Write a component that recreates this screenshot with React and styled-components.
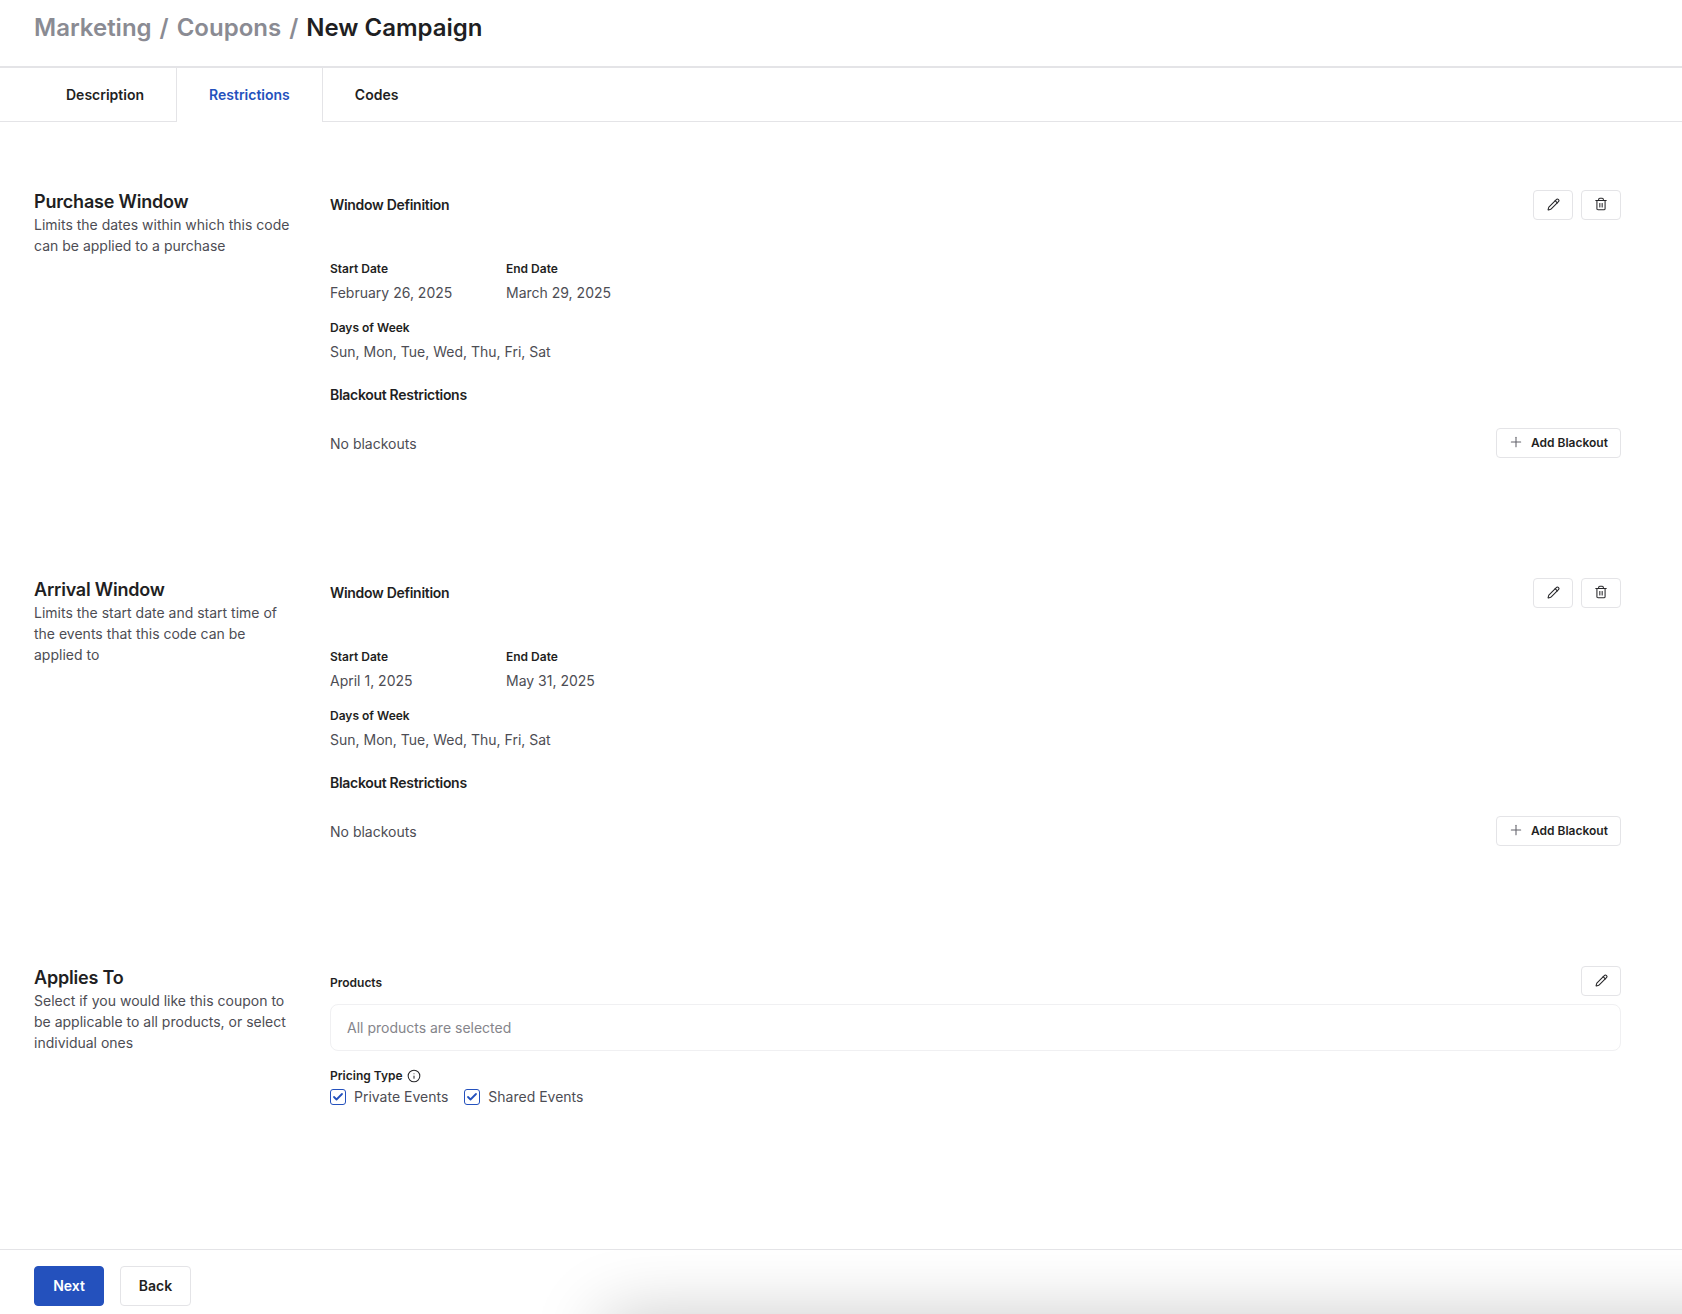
import React from "react";
import styled, { createGlobalStyle } from "styled-components";
import { Pencil, Trash2, Plus, Info, Check } from "lucide-react";

const Global = createGlobalStyle`
  html, body { margin: 0; padding: 0; background: #fff; }
  body { font-family: Inter, "Liberation Sans", sans-serif; color: #1f1f23; }
  * { box-sizing: border-box; }
`;

const Page = styled.div`
  width: 1682px;
  height: 1314px;
  display: flex;
  flex-direction: column;
  background: #fff;
  overflow: hidden;
`;

const Header = styled.header`
  flex: none;
  height: 68px;
  padding: 12px 34px 0;
  border-bottom: 2px solid #e4e4e7;
  display: flex;
  align-items: flex-start;
  font-size: 24px;
  font-weight: 600;
  line-height: 32px;
  color: #8a8b93;
`;

const Crumb = styled.span`
  color: ${(p) => (p.$current ? "#1f1f23" : "#8a8b93")};
`;

const Sep = styled.span`
  margin: 0 8px;
`;

const TabBar = styled.nav`
  flex: none;
  height: 54px;
  padding-left: 34px;
  border-bottom: 1px solid #e4e4e7;
  display: flex;
`;

const Tab = styled.div`
  height: ${(p) => (p.$active ? "54px" : "53px")};
  padding: 0 32px ${(p) => (p.$active ? "1px" : "0")};
  display: flex;
  align-items: center;
  font-size: 14px;
  font-weight: 600;
  color: ${(p) => (p.$active ? "#2451bd" : "#1f1f23")};
  background: #fff;
  border-right: ${(p) => (p.$last ? "none" : "1px solid #e4e4e7")};
  position: relative;
`;

const Main = styled.main`
  flex: 1;
  min-height: 0;
  padding: 68px 61px 0 34px;
`;

const Section = styled.section`
  display: grid;
  grid-template-columns: 296px 1fr;
  height: ${(p) => (p.$last ? "auto" : "388px")};
`;

const SectionIntro = styled.div`
  width: 258px;
`;

const SectionTitle = styled.h2`
  margin: 0;
  font-size: 18px;
  font-weight: 600;
  line-height: 24px;
  letter-spacing: -0.2px;
  color: #1f1f23;
`;

const SectionDesc = styled.p`
  margin: 0;
  font-size: 14px;
  line-height: 21px;
  color: #4d4d54;
`;

const Content = styled.div`
  display: flex;
  flex-direction: column;
`;

const HeadRow = styled.div`
  height: 30px;
  display: flex;
  align-items: center;
  justify-content: space-between;
`;

const Heading = styled.h3`
  margin: 0;
  font-size: 14px;
  font-weight: 600;
  line-height: 20px;
  letter-spacing: -0.3px;
  color: #1f1f23;
`;

const BlackoutHeading = styled(Heading)`
  margin-top: 23px;
`;

const Actions = styled.div`
  display: flex;
  gap: 8px;
`;

const IconButton = styled.button`
  width: 40px;
  height: 30px;
  padding: 0 0 2px;
  display: flex;
  align-items: center;
  justify-content: center;
  background: #fff;
  border: 1px solid #e4e4e7;
  border-radius: 4px;
  color: #27272a;
`;

const DateGrid = styled.div`
  margin-top: 41px;
  display: grid;
  grid-template-columns: 176px 176px;
`;

const Label = styled.div`
  font-size: 12px;
  font-weight: 600;
  line-height: 16px;
  color: #1f1f23;
`;

const ProductsLabel = styled(Label)`
  margin-top: 4px;
`;

const Value = styled.div`
  margin-top: 5px;
  font-size: 14px;
  line-height: 21px;
  color: #4d4d54;
`;

const DaysBlock = styled.div`
  margin-top: 17px;
`;

const BlackoutRow = styled.div`
  margin-top: 23px;
  height: 30px;
  display: flex;
  align-items: center;
  justify-content: space-between;
  font-size: 14px;
  color: #4d4d54;
`;

const AddButton = styled.button`
  width: 125px;
  height: 30px;
  padding: 0 0 2px 11px;
  display: flex;
  align-items: center;
  gap: 7px;
  background: #fff;
  border: 1px solid #e4e4e7;
  border-radius: 4px;
  font-family: inherit;
  font-size: 12px;
  font-weight: 600;
  color: #1f1f23;
  svg { color: #63636b; }
`;

const ProductBox = styled.div`
  margin-top: 8px;
  height: 47px;
  padding: 0 16px;
  display: flex;
  align-items: center;
  border: 1px solid #f0f0f2;
  border-radius: 8px;
  font-size: 14px;
  color: #85858b;
`;

const PricingLabel = styled(Label)`
  margin-top: 17px;
  display: flex;
  align-items: center;
  gap: 4px;
  svg { color: #27272a; }
`;

const Checks = styled.div`
  margin-top: 2px;
  height: 21px;
  display: flex;
  align-items: center;
  gap: 16px;
`;

const CheckItem = styled.label`
  display: flex;
  align-items: center;
  gap: 8px;
  font-size: 14px;
  color: #4d4d54;
`;

const CheckBox = styled.span`
  width: 16px;
  height: 16px;
  display: flex;
  align-items: center;
  justify-content: center;
  border: 1.5px solid #2451bd;
  border-radius: 3px;
  color: #2451bd;
`;

const Footer = styled.footer`
  flex: none;
  position: relative;
  overflow: hidden;
  height: 65px;
  padding: 16px 34px 0;
  border-top: 1px solid #e4e4e7;
  display: flex;
  gap: 16px;
  background: #fff;
`;

const EdgeShadow = styled.div`
  position: absolute;
  left: 610px;
  right: -80px;
  top: 72px;
  height: 60px;
  box-shadow: 0 0 70px 6px rgba(0, 0, 0, 0.22);
  background: #ddd;
`;

const FooterButton = styled.button`
  position: relative;
  width: ${(p) => (p.$primary ? "70px" : "71px")};
  height: 40px;
  padding: 0 0 1px;
  border-radius: 4px;
  border: 1px solid ${(p) => (p.$primary ? "#2451bd" : "#e4e4e7")};
  background: ${(p) => (p.$primary ? "#2451bd" : "#fff")};
  color: ${(p) => (p.$primary ? "#fff" : "#1f1f23")};
  font-family: inherit;
  font-size: 14px;
  font-weight: 600;
`;

function WindowSection({ title, desc, start, end }) {
  return (
    <Section>
      <SectionIntro>
        <SectionTitle>{title}</SectionTitle>
        <SectionDesc>{desc}</SectionDesc>
      </SectionIntro>
      <Content>
        <HeadRow>
          <Heading>Window Definition</Heading>
          <Actions>
            <IconButton aria-label="Edit"><Pencil size={13} strokeWidth={2} /></IconButton>
            <IconButton aria-label="Delete"><Trash2 size={14} strokeWidth={1.8} /></IconButton>
          </Actions>
        </HeadRow>
        <DateGrid>
          <div>
            <Label>Start Date</Label>
            <Value>{start}</Value>
          </div>
          <div>
            <Label>End Date</Label>
            <Value>{end}</Value>
          </div>
        </DateGrid>
        <DaysBlock>
          <Label>Days of Week</Label>
          <Value>Sun, Mon, Tue, Wed, Thu, Fri, Sat</Value>
        </DaysBlock>
        <BlackoutHeading>Blackout Restrictions</BlackoutHeading>
        <BlackoutRow>
          <span>No blackouts</span>
          <AddButton><Plus size={16} strokeWidth={1.6} />Add Blackout</AddButton>
        </BlackoutRow>
      </Content>
    </Section>
  );
}

export default function App() {
  return (
    <Page>
      <Global />
      <Header>
        <Crumb>Marketing</Crumb>
        <Sep>/</Sep>
        <Crumb>Coupons</Crumb>
        <Sep>/</Sep>
        <Crumb $current>New Campaign</Crumb>
      </Header>
      <TabBar>
        <Tab>Description</Tab>
        <Tab $active>Restrictions</Tab>
        <Tab $last>Codes</Tab>
      </TabBar>
      <Main>
        <WindowSection
          title="Purchase Window"
          desc="Limits the dates within which this code can be applied to a purchase"
          start="February 26, 2025"
          end="March 29, 2025"
        />
        <WindowSection
          title="Arrival Window"
          desc="Limits the start date and start time of the events that this code can be applied to"
          start="April 1, 2025"
          end="May 31, 2025"
        />
        <Section $last>
          <SectionIntro>
            <SectionTitle>Applies To</SectionTitle>
            <SectionDesc>Select if you would like this coupon to be applicable to all products, or select individual ones</SectionDesc>
          </SectionIntro>
          <Content>
            <HeadRow>
              <ProductsLabel>Products</ProductsLabel>
              <IconButton aria-label="Edit"><Pencil size={13} strokeWidth={2} /></IconButton>
            </HeadRow>
            <ProductBox>All products are selected</ProductBox>
            <PricingLabel>Pricing Type <Info size={14} strokeWidth={1.8} /></PricingLabel>
            <Checks>
              <CheckItem><CheckBox><Check size={12} strokeWidth={3.6} /></CheckBox>Private Events</CheckItem>
              <CheckItem><CheckBox><Check size={12} strokeWidth={3.6} /></CheckBox>Shared Events</CheckItem>
            </Checks>
          </Content>
        </Section>
      </Main>
      <Footer>
        <EdgeShadow />
        <FooterButton $primary>Next</FooterButton>
        <FooterButton>Back</FooterButton>
      </Footer>
    </Page>
  );
}
